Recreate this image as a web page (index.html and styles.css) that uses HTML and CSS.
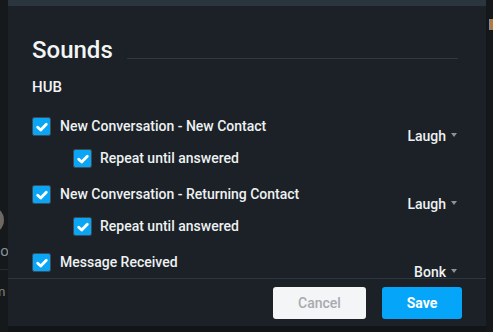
FILE: index.html
```html
<!DOCTYPE html>
<html>
<head>
<meta charset="utf-8">
<link rel="stylesheet" href="styles.css">
</head>
<body>
<div class="page">
  <div class="side">
    <div class="contact">
      <div class="avatar"></div>
    </div>
    <div class="contact-name">Jo</div>
    <div class="divider"></div>
    <div class="contact-sub">m</div>
  </div>
  <div class="rightcol">
    <div class="thumb"></div>
  </div>
</div>

<div class="modal">
  <div class="modal-top"></div>
  <div class="modal-body">
    <div class="section-head">
      <h2 class="title">Sounds</h2>
      <div class="rule"></div>
    </div>
    <div class="group-label">HUB</div>

    <div class="setting">
      <div class="checks">
        <label class="row">
          <span class="cb"><svg viewBox="0 0 12 12"><path d="M2.3 6.2 L4.9 8.6 L9.7 3.6"/></svg></span>
          <span class="lbl">New Conversation - New Contact</span>
        </label>
        <label class="row sub">
          <span class="cb"><svg viewBox="0 0 12 12"><path d="M2.3 6.2 L4.9 8.6 L9.7 3.6"/></svg></span>
          <span class="lbl">Repeat until answered</span>
        </label>
      </div>
      <div class="dropdown"><span>Laugh</span><i class="caret"></i></div>
    </div>

    <div class="setting">
      <div class="checks">
        <label class="row">
          <span class="cb"><svg viewBox="0 0 12 12"><path d="M2.3 6.2 L4.9 8.6 L9.7 3.6"/></svg></span>
          <span class="lbl">New Conversation - Returning Contact</span>
        </label>
        <label class="row sub">
          <span class="cb"><svg viewBox="0 0 12 12"><path d="M2.3 6.2 L4.9 8.6 L9.7 3.6"/></svg></span>
          <span class="lbl">Repeat until answered</span>
        </label>
      </div>
      <div class="dropdown"><span>Laugh</span><i class="caret"></i></div>
    </div>

    <div class="setting">
      <div class="checks">
        <label class="row">
          <span class="cb"><svg viewBox="0 0 12 12"><path d="M2.3 6.2 L4.9 8.6 L9.7 3.6"/></svg></span>
          <span class="lbl">Message Received</span>
        </label>
      </div>
      <div class="dropdown"><span>Bonk</span><i class="caret"></i></div>
    </div>
  </div>
  <div class="modal-footer">
    <button class="btn cancel">Cancel</button>
    <button class="btn save">Save</button>
  </div>
</div>
</body>
</html>
```

FILE: styles.css
```css
* { box-sizing: border-box; }
html, body {
  margin: 0;
  padding: 0;
  width: 493px;
  height: 332px;
  overflow: hidden;
  background: #121518;
  font-family: Roboto, "Liberation Sans", sans-serif;
}

.page {
  display: flex;
  justify-content: space-between;
  height: 332px;
}
.side {
  width: 8px;
  padding-top: 206px;
  overflow: hidden;
  background: #15191c;
}
.contact { height: 30px; }
.avatar {
  width: 28px;
  height: 28px;
  margin-left: -24px;
  border-radius: 50%;
  background: #6d6861;
}
.contact-name {
  margin-top: 6px;
  margin-left: -8px;
  color: #8a9095;
  font-size: 15px;
  line-height: 18px;
}
.divider {
  margin-top: 9px;
  height: 1px;
  background: #262d32;
}
.contact-sub {
  margin-top: 14px;
  margin-left: -6px;
  color: #7b8186;
  font-size: 13px;
  line-height: 16px;
}
.rightcol {
  width: 7px;
  padding-top: 19px;
  padding-left: 3px;
  background: #14181b;
}
.thumb {
  width: 4px;
  height: 11px;
  background: linear-gradient(90deg, #7c8fa0 0, #7c8fa0 1px, #b07a48 1px);
}

.modal {
  position: fixed;
  left: 8px;
  top: 0;
  width: 478px;
  height: 326px;
  background: #1b2126;
  display: flex;
  flex-direction: column;
}
.modal-top {
  height: 6px;
  background: #2a353e;
}
.modal-body {
  height: 272px;
  overflow: hidden;
  padding: 30px 29px 0 24px;
}
.section-head {
  display: flex;
  align-items: flex-end;
}
.title {
  margin: 0;
  font-size: 24px;
  line-height: 28px;
  font-weight: 500;
  color: #f2f4f5;
}
.rule {
  flex: 1;
  height: 1px;
  margin-left: 14px;
  margin-bottom: 5px;
  margin-right: -1px;
  background: #2e3a41;
}
.group-label {
  margin-top: 14px;
  font-size: 15px;
  line-height: 19px;
  font-weight: 500;
  color: #f2f4f5;
}

.setting {
  display: flex;
  justify-content: space-between;
  align-items: flex-start;
  margin-top: 17px;
}
.group-label + .setting { margin-top: 20px; }
.checks { display: flex; flex-direction: column; }
.row {
  display: flex;
  align-items: center;
  height: 19px;
  gap: 9px;
}
.row.sub {
  margin-top: 13px;
  margin-left: 41px;
  gap: 8px;
}
.cb {
  width: 19px;
  height: 19px;
  border: 1px solid #3a4d5a;
  border-radius: 2px;
  background: #0aa6f5;
  background-clip: padding-box;
  display: flex;
  align-items: center;
  justify-content: center;
}
.cb svg {
  width: 14px;
  height: 14px;
}
.cb path {
  fill: none;
  stroke: #ffffff;
  stroke-width: 2.4;
  stroke-linecap: round;
  stroke-linejoin: round;
}
.lbl {
  font-size: 14px;
  line-height: 19px;
  font-weight: 500;
  color: #eef1f3;
  white-space: nowrap;
}

.dropdown {
  display: flex;
  align-items: center;
  gap: 5px;
  margin-top: 9px;
  font-size: 14px;
  line-height: 20px;
  font-weight: 500;
  color: #eef1f3;
}
.caret {
  width: 0;
  height: 0;
  border-left: 3.5px solid transparent;
  border-right: 3.5px solid transparent;
  border-top: 4px solid #8a939a;
  margin-top: -2px;
}

.modal-footer {
  border-top: 1px solid #2c373f;
  display: flex;
  justify-content: flex-end;
  gap: 16px;
  padding: 8px 24px 0 0;
}
.btn {
  height: 32px;
  border: 0;
  border-radius: 3px;
  font-family: Roboto, "Liberation Sans", sans-serif;
  font-size: 14px;
  font-weight: 500;
  padding: 0;
}
.cancel {
  width: 93px;
  background: #f4f5f6;
  color: #a7abaf;
}
.save {
  width: 80px;
  background: #05a6fa;
  color: #ffffff;
  font-weight: 700;
}
```
